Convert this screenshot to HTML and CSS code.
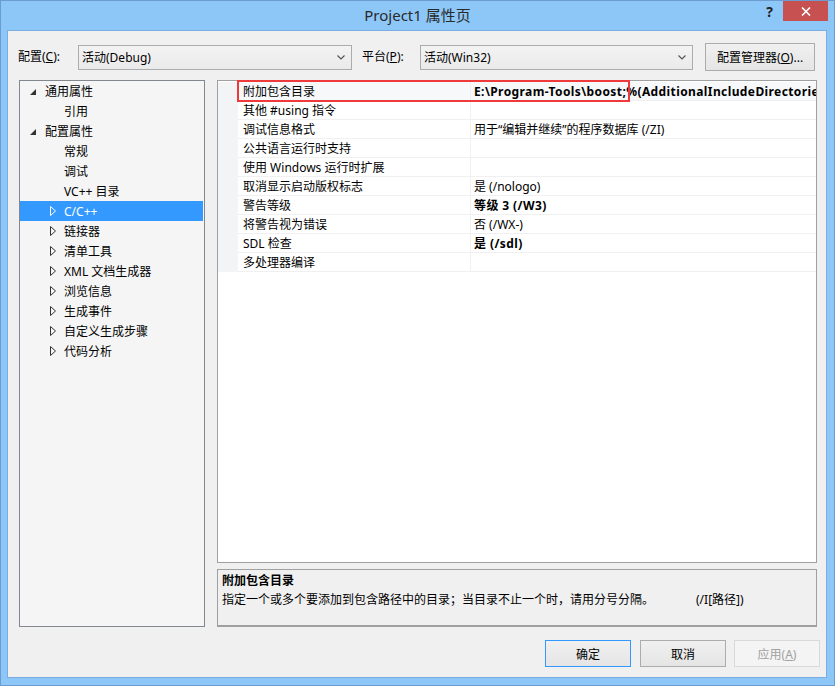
FILE: index.html
```html
<!DOCTYPE html>
<html lang="zh-CN">
<head>
<meta charset="utf-8">
<title>Project1 属性页</title>
<link rel="stylesheet" href="styles.css">
</head>
<body>
<div class="window">
  <div class="titlebar">
    <div class="tb-left"></div>
    <div class="tb-title">Project1 属性页</div>
    <div class="tb-right">
      <span class="help">?</span>
      <span class="close"><svg width="10" height="9" viewBox="0 0 10 9"><path d="M1 0.5 L9 8.5 M9 0.5 L1 8.5" stroke="#fff" stroke-width="1.6"/></svg></span>
    </div>
  </div>
  <div class="client">
    <div class="config-row">
      <label class="lbl lbl1">配置(<u>C</u>):</label>
      <div class="combo combo1"><span>活动(Debug)</span><svg class="chev" width="8" height="5" viewBox="0 0 8 5"><path d="M0.5 0.5 L4 4 L7.5 0.5" fill="none" stroke="#555" stroke-width="1.2"/></svg></div>
      <label class="lbl lbl2">平台(<u>P</u>):</label>
      <div class="combo combo2"><span>活动(Win32)</span><svg class="chev" width="8" height="5" viewBox="0 0 8 5"><path d="M0.5 0.5 L4 4 L7.5 0.5" fill="none" stroke="#555" stroke-width="1.2"/></svg></div>
      <button class="btn btn-mgr">配置管理器(<u>O</u>)...</button>
    </div>
    <div class="main">
      <div class="tree">
        <div class="node top"><svg class="exp" width="6" height="6" viewBox="0 0 6 6"><polygon points="6,0 6,6 0,6" fill="#333"/></svg><span>通用属性</span></div>
        <div class="node leaf"><span>引用</span></div>
        <div class="node top"><svg class="exp" width="6" height="6" viewBox="0 0 6 6"><polygon points="6,0 6,6 0,6" fill="#333"/></svg><span>配置属性</span></div>
        <div class="node leaf"><span>常规</span></div>
        <div class="node leaf"><span>调试</span></div>
        <div class="node leaf"><span>VC++ 目录</span></div>
        <div class="node col sel"><svg class="cl" width="6" height="10" viewBox="0 0 6 10"><polygon points="0.5,0.5 5.5,5 0.5,9.5" fill="none" stroke="#fff"/></svg><span>C/C++</span></div>
        <div class="node col"><svg class="cl" width="6" height="10" viewBox="0 0 6 10"><polygon points="0.5,0.5 5.5,5 0.5,9.5" fill="none" stroke="#333"/></svg><span>链接器</span></div>
        <div class="node col"><svg class="cl" width="6" height="10" viewBox="0 0 6 10"><polygon points="0.5,0.5 5.5,5 0.5,9.5" fill="none" stroke="#333"/></svg><span>清单工具</span></div>
        <div class="node col"><svg class="cl" width="6" height="10" viewBox="0 0 6 10"><polygon points="0.5,0.5 5.5,5 0.5,9.5" fill="none" stroke="#333"/></svg><span>XML 文档生成器</span></div>
        <div class="node col"><svg class="cl" width="6" height="10" viewBox="0 0 6 10"><polygon points="0.5,0.5 5.5,5 0.5,9.5" fill="none" stroke="#333"/></svg><span>浏览信息</span></div>
        <div class="node col"><svg class="cl" width="6" height="10" viewBox="0 0 6 10"><polygon points="0.5,0.5 5.5,5 0.5,9.5" fill="none" stroke="#333"/></svg><span>生成事件</span></div>
        <div class="node col"><svg class="cl" width="6" height="10" viewBox="0 0 6 10"><polygon points="0.5,0.5 5.5,5 0.5,9.5" fill="none" stroke="#333"/></svg><span>自定义生成步骤</span></div>
        <div class="node col"><svg class="cl" width="6" height="10" viewBox="0 0 6 10"><polygon points="0.5,0.5 5.5,5 0.5,9.5" fill="none" stroke="#333"/></svg><span>代码分析</span></div>
      </div>
      <div class="right">
        <div class="grid">
          <div class="row"><div class="gut"></div><div class="name">附加包含目录</div><div class="val b">E:\Program-Tools\boost;%(AdditionalIncludeDirectories)</div></div>
          <div class="row"><div class="gut"></div><div class="name">其他 #using 指令</div><div class="val"></div></div>
          <div class="row"><div class="gut"></div><div class="name">调试信息格式</div><div class="val">用于“编辑并继续”的程序数据库 (/ZI)</div></div>
          <div class="row"><div class="gut"></div><div class="name">公共语言运行时支持</div><div class="val"></div></div>
          <div class="row"><div class="gut"></div><div class="name">使用 Windows 运行时扩展</div><div class="val"></div></div>
          <div class="row"><div class="gut"></div><div class="name">取消显示启动版权标志</div><div class="val">是 (/nologo)</div></div>
          <div class="row"><div class="gut"></div><div class="name">警告等级</div><div class="val b">等级 3 (/W3)</div></div>
          <div class="row"><div class="gut"></div><div class="name">将警告视为错误</div><div class="val">否 (/WX-)</div></div>
          <div class="row"><div class="gut"></div><div class="name">SDL 检查</div><div class="val b">是 (/sdl)</div></div>
          <div class="row"><div class="gut"></div><div class="name">多处理器编译</div><div class="val"></div></div>
          <div class="redbox"></div>
        </div>
        <div class="desc">
          <div class="desc-title">附加包含目录</div>
          <div class="desc-text">指定一个或多个要添加到包含路径中的目录；当目录不止一个时，请用分号分隔。<span class="sw">(/I[路径])</span></div>
        </div>
      </div>
    </div>
    <div class="buttons">
      <button class="btn dlg default">确定</button>
      <button class="btn dlg">取消</button>
      <button class="btn dlg disabled">应用(<u>A</u>)</button>
    </div>
  </div>
</div>
</body>
</html>
```

FILE: styles.css
```css
* { box-sizing: border-box; }
html, body { margin: 0; padding: 0; }
body {
  font-family: "Noto Sans", "Noto Sans CJK SC", sans-serif;
  font-size: 12px;
  color: #000;
  background: #8cc7f8;
}
.window {
  width: 835px;
  height: 686px;
  background: #8cc7f8;
  border: 1px solid #6c9bd0;
  display: flex;
  flex-direction: column;
  padding: 0 7px 7px 6px;
}
.titlebar {
  height: 29px;
  display: grid;
  grid-template-columns: 1fr auto 1fr;
  align-items: start;
  margin: 0 -7px 0 -6px;
}
.tb-title {
  font-size: 15px;
  color: #2a2a2a;
  padding-top: 4px;
  line-height: 20px;
}
.tb-right {
  display: flex;
  justify-content: flex-end;
  align-items: flex-start;
  padding-right: 6px;
}
.help {
  font-weight: bold;
  font-size: 14px;
  color: #222;
  margin-top: 3px;
  margin-right: 10px;
  line-height: 16px;
}
.close {
  width: 45px;
  height: 20px;
  background: #c75050;
  display: flex;
  align-items: center;
  justify-content: center;
}
.client {
  flex: 1;
  background: #f0f0f0;
  border: 1px solid #7aaee2;
  display: flex;
  flex-direction: column;
  padding-top: 12px;
}
.config-row {
  display: flex;
  align-items: center;
  height: 28px;
  padding-left: 10px;
}
.lbl { display: block; line-height: 16px; }
.lbl1 { width: 60px; }
.lbl2 { width: 58px; margin-left: 10px; }
.combo {
  height: 25px;
  border: 1px solid #acacac;
  background: linear-gradient(#f3f3f3, #eaeaea);
  display: flex;
  align-items: center;
  justify-content: space-between;
  padding: 0 6px 0 3px;
}
.combo1 { width: 274px; }
.combo2 { width: 273px; }
.chev { display: block; }
.btn {
  font-family: inherit;
  font-size: 12px;
  color: #000;
  border: 1px solid #acacac;
  background: linear-gradient(#f0f0f0, #e5e5e5);
  padding: 0;
  margin: 0;
}
.btn-mgr { width: 110px; height: 28px; margin-left: 12px; }
.main {
  display: flex;
  margin-top: 9px;
  padding-left: 11px;
  gap: 12px;
  height: 547px;
}
.tree {
  width: 186px;
  border: 1px solid #828790;
  background: #f5f5f5;
}
.node {
  height: 20px;
  display: flex;
  align-items: center;
  line-height: 16px;
  padding-top: 2px;
  margin: 0 1px 0 0;
}
.node > svg { margin-top: -2px; }
.node.top { padding-left: 10px; }
.node.top .exp { margin-top: 0; margin-right: 9px; display: block; }
.node.leaf { padding-left: 44px; }
.node.col { padding-left: 30px; }
.node.col .cl { margin-right: 8px; display: block; }
.node.sel { background: #3399ff; color: #fff; }
.right {
  width: 600px;
  display: flex;
  flex-direction: column;
  gap: 6px;
}
.grid {
  position: relative;
  height: 483px;
  border: 1px solid #a0a0a0;
  background: #fff;
  padding-top: 1px;
}
.row {
  display: flex;
  height: 19px;
  line-height: 18px;
}
.gut { width: 20px; background: #f3f4f6; }
.name {
  width: 233px;
  padding-left: 5px;
  padding-top: 1px;
  border-bottom: 1px solid #f0f0f0;
  border-right: 1px solid #f0f0f0;
  white-space: nowrap;
}
.val {
  flex: 1;
  padding-left: 3px;
  padding-top: 1px;
  border-bottom: 1px solid #f0f0f0;
  white-space: nowrap;
  overflow: hidden;
}
.val.b { font-weight: bold; letter-spacing: 0.4px; }
.row:first-child .name, .row:first-child .val { background: #f7f8fa; }
.redbox {
  position: absolute;
  left: 19px;
  top: -1px;
  width: 393px;
  height: 22px;
  border: 2px solid #ee3a3a;
}
.desc {
  height: 58px;
  border: 1px solid #a0a0a0;
  border-bottom: 2px solid #a0a0a0;
  background: #f0f0f0;
  padding: 1px 4px;
  line-height: 19px;
}
.desc-title { font-weight: bold; }
.sw { margin-left: 42px; }
.buttons {
  display: flex;
  justify-content: flex-end;
  margin-top: 13px;
  padding-right: 6px;
  gap: 8px;
}
.dlg { width: 86px; height: 27px; }
.dlg.default { border-color: #3399ff; margin-right: 1px; }
.dlg.disabled {
  color: #a0a0a0;
  border-color: #d9d9d9;
  background: #f4f4f4;
}
```
